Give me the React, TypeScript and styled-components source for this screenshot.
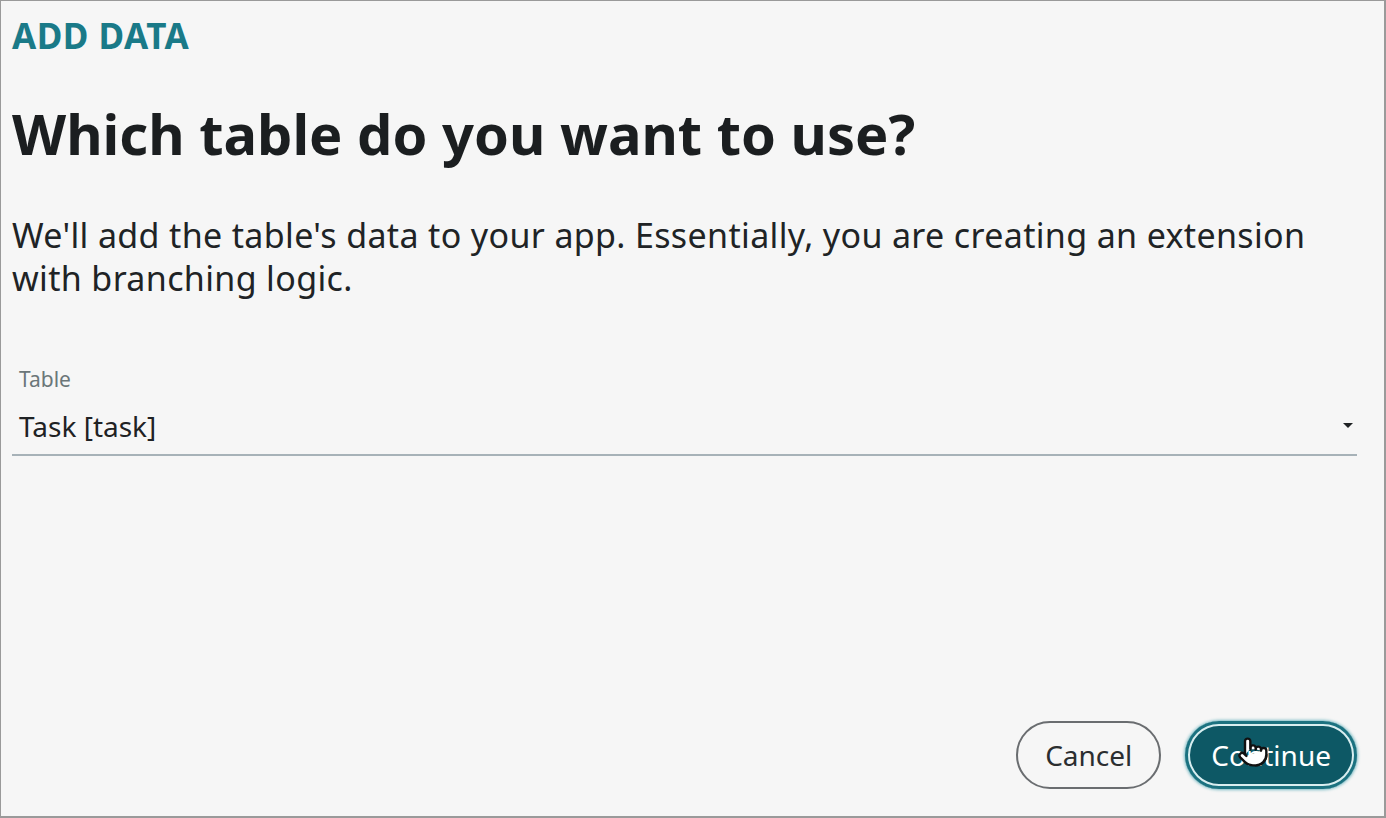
import React from "react";
import styled, { createGlobalStyle } from "styled-components";
import { Pointer } from "lucide-react";

const Global = createGlobalStyle`
  html, body { margin: 0; padding: 0; background: #f6f6f6; }
  * { box-sizing: border-box; }
`;

const Frame = styled.div`
  width: 1386px;
  height: 818px;
  border: 1px solid #9a9a9a;
  border-right-width: 2px;
  border-bottom-width: 2px;
  background: #f6f6f6;
  font-family: "Noto Sans", "Open Sans", sans-serif;
  color: #1c1f21;
  display: flex;
  flex-direction: column;
  padding: 12px 27px 27px 11px;
`;

const Eyebrow = styled.div`
  font-size: 35px;
  font-weight: 700;
  color: #1a7a88;
  line-height: 46px;
  letter-spacing: 0.5px;
`;

const Title = styled.h1`
  margin: 38px 0 0;
  font-size: 56px;
  font-weight: 700;
  line-height: 72px;
  color: #1b1e20;
`;

const Lead = styled.p`
  margin: 45px 0 0;
  font-size: 34px;
  line-height: 43px;
  letter-spacing: 0.35px;
  color: #202325;
  max-width: 1330px;
`;

const Field = styled.div`
  margin-top: 65px;
  display: flex;
  flex-direction: column;
`;

const Label = styled.label`
  font-size: 21px;
  line-height: 28px;
  color: #6b7679;
  padding-left: 7px;
`;

const SelectRow = styled.div`
  display: flex;
  align-items: center;
  justify-content: space-between;
  height: 63px;
  padding: 4px 4px 0 7px;
  border-bottom: 2px solid #a7b2b8;
`;

const Value = styled.span`
  font-size: 28px;
  color: #1f2224;
`;

const Caret = styled.span`
  width: 0;
  height: 0;
  border-left: 5px solid transparent;
  border-right: 5px solid transparent;
  border-top: 5px solid #1f2224;
`;

const Spacer = styled.div`
  flex: 1;
`;

const Actions = styled.div`
  display: flex;
  justify-content: flex-end;
  gap: 24px;
  align-items: center;
`;

const Button = styled.button<{ $primary?: boolean }>`
  position: relative;
  height: 68px;
  padding: 0 ${(p) => (p.$primary ? "26px" : "27px")};
  border-radius: 34px;
  font-family: "Noto Sans", "Open Sans", sans-serif;
  font-size: 28px;
  cursor: pointer;
  background: ${(p) => (p.$primary ? "#0d5865" : "transparent")};
  color: ${(p) => (p.$primary ? "#ffffff" : "#2b2e30")};
  border: ${(p) => (p.$primary ? "none" : "2px solid #6a6d70")};
  box-shadow: ${(p) =>
    p.$primary
      ? "inset 0 0 0 3px #1b7280, inset 0 0 0 5px #d8eef0, 0 0 3px 1px rgba(40,150,165,0.6)"
      : "none"};
`;

const Cursor = styled.span`
  position: absolute;
  left: 52px;
  top: 15px;
  display: flex;
  pointer-events: none;
`;

export default function App() {
  return (
    <>
      <Global />
      <Frame>
        <Eyebrow>ADD DATA</Eyebrow>
        <Title>Which table do you want to use?</Title>
        <Lead>
          We'll add the table's data to your app. Essentially, you are creating an extension
          with branching logic.
        </Lead>
        <Field>
          <Label>Table</Label>
          <SelectRow>
            <Value>Task [task]</Value>
            <Caret />
          </SelectRow>
        </Field>
        <Spacer />
        <Actions>
          <Button>Cancel</Button>
          <Button $primary>
            Continue
            <Cursor>
              <Pointer size={32} fill="#ffffff" color="#111111" strokeWidth={1.8} />
            </Cursor>
          </Button>
        </Actions>
      </Frame>
    </>
  );
}
